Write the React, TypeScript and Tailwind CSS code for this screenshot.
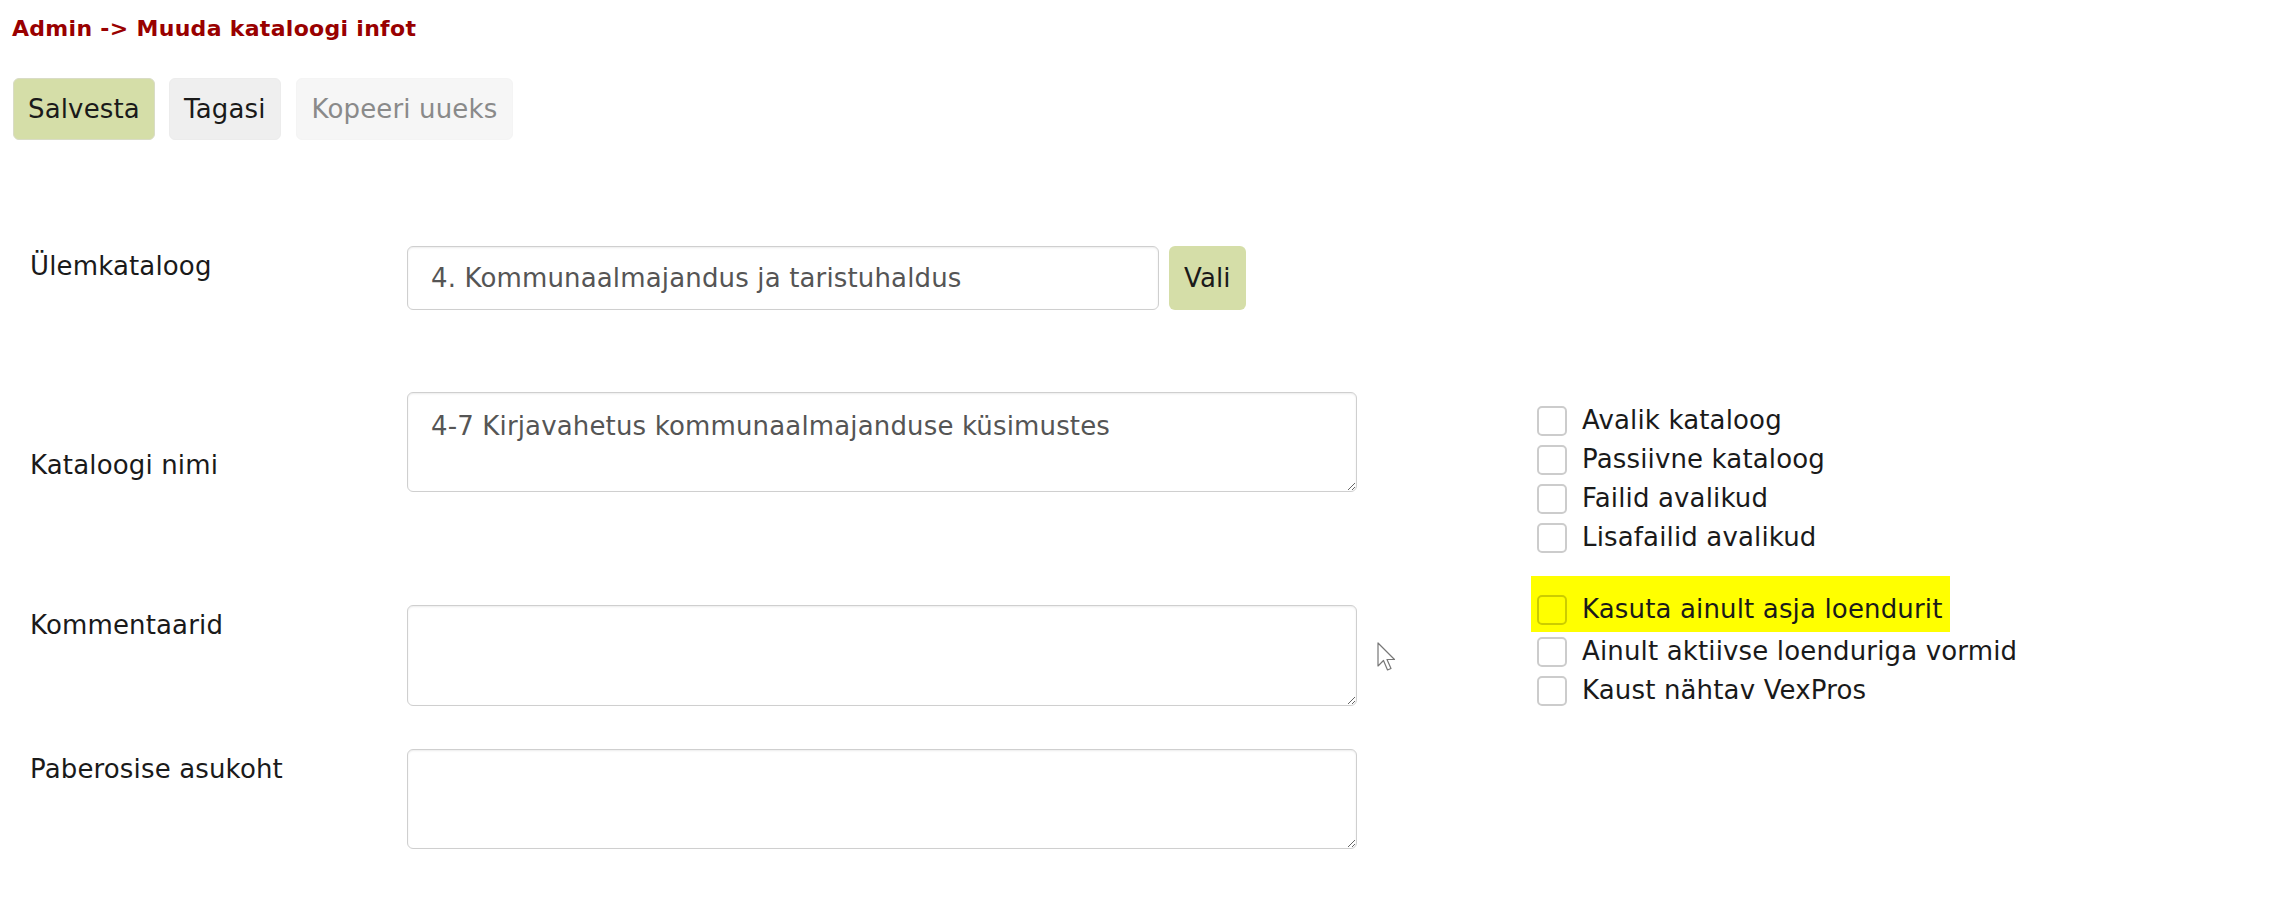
import React from 'react';

const Box = () => (
  <span className="inline-block h-[30px] w-[30px] shrink-0 rounded-[5px] border-2 border-black/20" />
);

const Check = ({ label }: { label: string }) => (
  <label className="flex h-[39px] items-center gap-[15px] whitespace-nowrap">
    <Box />
    <span>{label}</span>
  </label>
);

export default function App() {
  return (
    <div className="relative min-h-screen bg-white font-['DejaVu_Sans',Verdana,sans-serif] text-[26px] leading-[39px] tracking-[0.15px] text-[#1a1a1a]">
      <div className="pl-[12px] pt-[13px] text-[22px] font-bold leading-[32px] tracking-[0.3px] text-[#990000]">
        Admin -&gt; Muuda kataloogi infot
      </div>

      <div className="mt-[33px] flex pl-[13px]">
        <button className="h-[62px] rounded-[6px] border border-[#d9dcc6] bg-[#d5dea8] px-[14px] text-[#1a1a1a]">
          Salvesta
        </button>
        <button className="ml-[14px] h-[62px] rounded-[6px] border border-[#ececec] bg-[#efefef] px-[14px] text-[#1a1a1a]">
          Tagasi
        </button>
        <button className="ml-[15px] h-[62px] rounded-[6px] border border-[#f4f4f4] bg-[#f6f6f6] px-[15px] text-[#8a8a8a]">
          Kopeeri uueks
        </button>
      </div>

      <div className="mt-[106px] flex">
        {/* form fields */}
        <div className="pl-[30px]">
          <div className="flex">
            <div className="w-[377px] pt-[1px]">Ülemkataloog</div>
            <input
              className="h-[64px] w-[752px] rounded-[6px] border border-[#cfcfcf] px-[23px] text-[#555] shadow-[inset_0_1px_2px_rgba(0,0,0,0.08)] outline-none"
              defaultValue="4. Kommunaalmajandus ja taristuhaldus"
              readOnly
            />
            <button className="ml-[10px] h-[64px] rounded-[6px] bg-[#d5dea8] px-[15px] text-[#1a1a1a]">Vali</button>
          </div>

          <div className="mt-[82px] flex">
            <div className="w-[377px] pt-[54px]">Kataloogi nimi</div>
            <textarea
              className="block h-[100px] w-[950px] rounded-[6px] border border-[#cfcfcf] px-[23px] pt-[14px] text-[#555] shadow-[inset_0_1px_2px_rgba(0,0,0,0.08)] outline-none"
              defaultValue="4-7 Kirjavahetus kommunaalmajanduse küsimustes"
            />
          </div>

          <div className="mt-[113px] flex">
            <div className="w-[377px] pt-[1px]">Kommentaarid</div>
            <textarea className="block h-[101px] w-[950px] rounded-[6px] border border-[#cfcfcf] px-[23px] pt-[14px] text-[#555] shadow-[inset_0_1px_2px_rgba(0,0,0,0.08)] outline-none" />
          </div>

          <div className="mt-[43px] flex">
            <div className="w-[377px] pt-[1px]">Paberosise asukoht</div>
            <textarea className="block h-[100px] w-[950px] rounded-[6px] border border-[#cfcfcf] px-[23px] pt-[14px] text-[#555] shadow-[inset_0_1px_2px_rgba(0,0,0,0.08)] outline-none" />
          </div>
        </div>

        {/* checkbox column */}
        <div className="ml-[174px] mt-[155px] flex flex-col items-start">
          <div className="pl-[6px]">
            <Check label="Avalik kataloog" />
            <Check label="Passiivne kataloog" />
            <Check label="Failid avalikud" />
            <Check label="Lisafailid avalikud" />
          </div>
          <div className="mt-[19px] bg-[#ffff00] pb-[3px] pl-[6px] pr-[7px] pt-[14px]">
            <Check label="Kasuta ainult asja loendurit" />
          </div>
          <div className="pl-[6px]">
            <Check label="Ainult aktiivse loenduriga vormid" />
            <Check label="Kaust nähtav VexPros" />
          </div>
        </div>
      </div>

      {/* mouse pointer */}
      <svg className="absolute left-[1377px] top-[642px]" width="20" height="31" viewBox="0 0 20 31">
        <path d="M1 1 L1 24 L6.5 18.5 L10.5 28 L14 26.5 L10 17.5 L17.5 17.5 Z" fill="#fff" stroke="#777" strokeWidth="1.2" strokeLinejoin="round" />
      </svg>
    </div>
  );
}
